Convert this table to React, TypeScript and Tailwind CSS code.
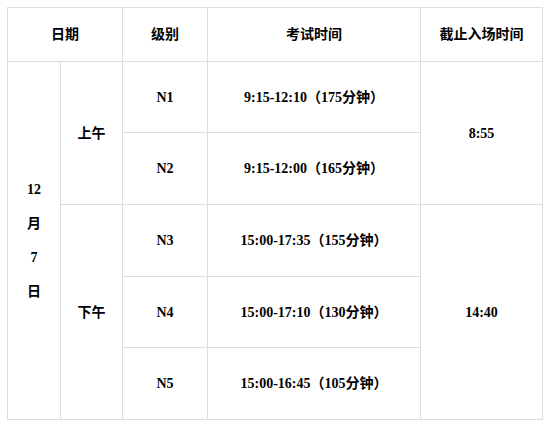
const serif = "font-['Liberation_Serif','Noto_Sans_CJK_SC',serif]"

const rows = [
  { level: "N1", time: "9:15-12:10（175分钟）" },
  { level: "N2", time: "9:15-12:00（165分钟）" },
  { level: "N3", time: "15:00-17:35（155分钟）" },
  { level: "N4", time: "15:00-17:10（130分钟）" },
  { level: "N5", time: "15:00-16:45（105分钟）" },
]

const rowStart = ["row-start-2", "row-start-3", "row-start-4", "row-start-5", "row-start-6"]

export default function App() {
  return (
    <div className="min-h-[429px] w-[553px] bg-white pl-[7px] pt-[7px]">
      <div
        className={`grid w-[536px] grid-cols-[52px_61px_84px_212px_121px] grid-rows-[53px_70px_71px_71px_70px_71px] gap-px border border-[#dddddd] bg-[#dddddd] text-[14px] font-bold text-black ${serif}`}
      >
        {/* header */}
        <div className="col-span-2 flex items-center justify-center bg-white">日期</div>
        <div className="flex items-center justify-center bg-white">级别</div>
        <div className="flex items-center justify-center bg-white">考试时间</div>
        <div className="flex items-center justify-center bg-white">截止入场时间</div>

        {/* date */}
        <div className="col-start-1 row-span-5 row-start-2 flex flex-col items-center justify-center bg-white leading-[34px]">
          <span>12</span>
          <span>月</span>
          <span>7</span>
          <span>日</span>
        </div>
        <div className="col-start-2 row-span-2 row-start-2 flex items-center justify-center bg-white">上午</div>
        <div className="col-start-2 row-span-3 row-start-4 flex items-center justify-center bg-white">下午</div>

        {rows.map((r, i) => (
          <div key={r.level} className={`col-start-3 ${rowStart[i]} flex items-center justify-center bg-white`}>
            {r.level}
          </div>
        ))}
        {rows.map((r, i) => (
          <div key={r.time} className={`col-start-4 ${rowStart[i]} flex items-center justify-center bg-white`}>
            {r.time}
          </div>
        ))}

        <div className="col-start-5 row-span-2 row-start-2 flex items-center justify-center bg-white">8:55</div>
        <div className="col-start-5 row-span-3 row-start-4 flex items-center justify-center bg-white">14:40</div>
      </div>
    </div>
  )
}
